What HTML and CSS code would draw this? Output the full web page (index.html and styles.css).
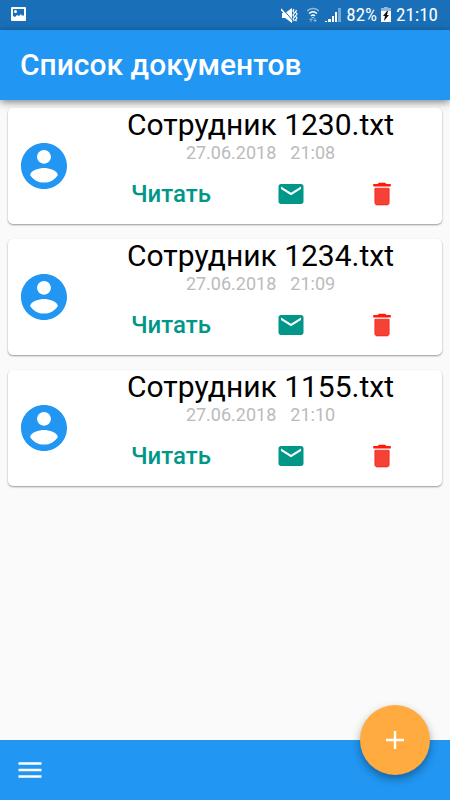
FILE: index.html
```html
<!DOCTYPE html>
<html lang="ru">
<head>
<meta charset="utf-8">
<meta name="viewport" content="width=device-width, initial-scale=1">
<title>Список документов</title>
<link rel="stylesheet" href="styles.css">
</head>
<body>
<svg class="defs" aria-hidden="true">
  <symbol id="account" viewBox="2 2 20 20"><path d="M12 2C6.48 2 2 6.48 2 12s4.48 10 10 10 10-4.48 10-10S17.52 2 12 2zm0 3c1.66 0 3 1.34 3 3s-1.34 3-3 3-3-1.34-3-3 1.34-3 3-3zm0 14.2c-2.500 0-4.710-1.280-6-3.220.03-1.990 4-3.080 6-3.080 1.990 0 5.970 1.090 6 3.080-1.290 1.940-3.500 3.220-6 3.220z"/></symbol>
  <symbol id="mail" viewBox="0 0 24 24"><path d="M20 4H4c-1.100 0-1.990.9-1.990 2L2 18c0 1.100.9 2 2 2h16c1.100 0 2-.9 2-2V6c0-1.100-.9-2-2-2zm0 4l-8 5-8-5V6l8 5 8-5v2z"/></symbol>
  <symbol id="trash" viewBox="0 0 24 24"><path class="can" d="M6.300 19c0 1 .8 1.700 1.700 1.700h8c1 0 1.700-.8 1.700-1.700V7.400H6.300V19z"/><path class="lid" d="M19 4h-3.500l-1-1h-5l-1 1H5v2h14V4z"/></symbol>
</svg>
<div class="screen">
  <div class="status">
    <svg class="status-picture" viewBox="0 0 16 16" aria-hidden="true"><rect x="0" y="0" width="15" height="14" rx="1" fill="#fff"/><path d="M2 2h11v7l-1-1-1 1-1-2-2 2-2-1-2 2-2-1z" fill="#1a70b8"/><circle cx="4.500" cy="4.500" r="1.500" fill="#fff"/></svg>
    <div class="status-right">
      <svg class="status-mute" viewBox="0 0 17 17" aria-hidden="true"><path d="M1 6h3l7-5v15l-7-5H1z" fill="#fff"/><path d="M1.500 1.500l11 13" stroke="#1a70b8" stroke-width="1"/><path d="M0 2l11 13" stroke="#fff" stroke-width="1.500"/><path d="M13 2l-1 2 1.500 2-1.500 2 1.500 2-1.500 2 1.500 2M15.500 3l-1 2 1.500 2-1.500 2 1.500 2-1.500 2 1 1" fill="none" stroke="#fff" stroke-width="1.200"/></svg>
      <svg class="status-wifi" viewBox="0 0 12 16" aria-hidden="true"><g fill="none" stroke="#fff" stroke-width="1.500"><path d="M0 4q6-5 12 0" opacity=".5"/><path d="M2 6.500q4-3.500 8 0M4 9q2-2 4 0"/></g><path d="M5 10h2l-1 1.500z" fill="#fff"/><path d="M2 13l2-2 2 2zM6 13h4l-2 2zM3.500 13h1v2h-1zM7.500 11h1v2h-1z" fill="#fff" opacity=".5"/></svg>
      <svg class="status-signal" viewBox="0 0 16 16" aria-hidden="true"><path d="M0 14h2v1H0zM3 12h3v3H3zM7 9h2v6H7zM10 5h2v10h-2z" fill="#fff"/><path d="M13 1h3v14h-3z" fill="#fff" opacity=".4"/></svg>
      <span class="battery-text">82%</span>
      <svg class="status-battery" viewBox="0 0 10 16" aria-hidden="true"><path d="M3 0h4v1h3v3H0V1h3z" fill="#fff" opacity=".5"/><path d="M0 4h10v11H0z" fill="#fff"/><path d="M6 4L2 9h2l-1 5 5-6H6l1-4z" fill="#111"/></svg>
      <span>21:10</span>
    </div>
  </div>
  <header class="appbar"><h1>Список документов</h1></header>
  <main class="list">
    <article class="card">
      <svg class="avatar" aria-hidden="true"><use href="#account"/></svg>
      <div class="content">
        <h2>Сотрудник 1230.txt</h2>
        <p class="date"><span>27.06.2018</span><span>21:08</span></p>
        <div class="actions">
          <button class="read" type="button">Читать</button>
          <button class="icon mail" type="button" aria-label="Отправить"><svg><use href="#mail"/></svg></button>
          <button class="icon trash" type="button" aria-label="Удалить"><svg><use href="#trash"/></svg></button>
        </div>
      </div>
    </article>
    <article class="card">
      <svg class="avatar" aria-hidden="true"><use href="#account"/></svg>
      <div class="content">
        <h2>Сотрудник 1234.txt</h2>
        <p class="date"><span>27.06.2018</span><span>21:09</span></p>
        <div class="actions">
          <button class="read" type="button">Читать</button>
          <button class="icon mail" type="button" aria-label="Отправить"><svg><use href="#mail"/></svg></button>
          <button class="icon trash" type="button" aria-label="Удалить"><svg><use href="#trash"/></svg></button>
        </div>
      </div>
    </article>
    <article class="card">
      <svg class="avatar" aria-hidden="true"><use href="#account"/></svg>
      <div class="content">
        <h2>Сотрудник 1155.txt</h2>
        <p class="date"><span>27.06.2018</span><span>21:10</span></p>
        <div class="actions">
          <button class="read" type="button">Читать</button>
          <button class="icon mail" type="button" aria-label="Отправить"><svg><use href="#mail"/></svg></button>
          <button class="icon trash" type="button" aria-label="Удалить"><svg><use href="#trash"/></svg></button>
        </div>
      </div>
    </article>
  </main>
  <footer class="bottombar">
    <button class="menu" type="button" aria-label="Меню"><svg viewBox="0 0 24 16"><path d="M.5.3h23v2.500H.5zM.5 6.700h23v2.600H.5zM.5 13.200h23v2.500H.5z"/></svg></button>
    <button class="fab" type="button" aria-label="Добавить"><svg viewBox="0 0 18 18"><path d="M7.800 0h2.400v7.800H18v2.400h-7.800V18H7.800v-7.800H0V7.800h7.800z"/></svg></button>
  </footer>
</div>
</body>
</html>
```
FILE: styles.css
```css
* {
  box-sizing: border-box;
}

body {
  margin: 0;
  background: #fafafa;
  color: #000;
  font-family: Roboto, "Noto Sans", sans-serif;
}

h1, h2, p {
  margin: 0;
}

button {
  margin: 0;
  padding: 0;
  border: 0;
  background: none;
  font: inherit;
  cursor: pointer;
}

svg {
  display: block;
}

.defs {
  display: none;
}

.screen {
  display: flex;
  flex-direction: column;
  min-height: 100vh;
}

.status {
  display: flex;
  align-items: center;
  justify-content: space-between;
  height: 30px;
  padding: 0 12px 0 11px;
  background: #1a70b8;
  color: #fff;
  font-family: "Roboto Condensed", Roboto, sans-serif;
  font-size: 19px;
  line-height: 30px;
}

.status-right {
  display: flex;
  align-items: center;
}

.status-picture {
  width: 16px;
  height: 16px;
}

.status-mute {
  width: 17px;
  height: 17px;
  margin-right: 9px;
}

.status-wifi {
  width: 12px;
  height: 16px;
  margin-right: 6px;
}

.status-signal {
  width: 16px;
  height: 16px;
  margin-right: 5px;
}

.status-battery {
  width: 10px;
  height: 16px;
  margin: 0 5px 0 4px;
}

.appbar {
  display: flex;
  align-items: center;
  height: 70px;
  padding: 0 20px;
  background: #2196f3;
  color: #fff;
  box-shadow: 0 2px 8px rgba(0, 0, 0, 0.5);
}

.appbar h1 {
  font-size: 30px;
  font-weight: 500;
  line-height: 40px;
}

.list {
  display: flex;
  flex: 1;
  flex-direction: column;
  gap: 15px;
  padding: 8px;
}

.card {
  display: flex;
  align-items: center;
  height: 116px;
  padding-left: 13px;
  border-radius: 5px;
  background: #fff;
  box-shadow: 0 1px 2px rgba(0, 0, 0, 0.4);
}

.avatar {
  flex: none;
  width: 46px;
  height: 46px;
  fill: #2196f3;
}

.content {
  flex: 1;
  height: 100%;
  margin-left: 12px;
  text-align: center;
}

.content h2 {
  font-size: 30px;
  font-weight: 400;
  line-height: 34px;
}

.date {
  display: flex;
  justify-content: center;
  gap: 14px;
  color: #bbb;
  font-size: 18px;
  line-height: 22px;
}

.actions {
  display: flex;
  align-items: center;
  justify-content: center;
  height: 60px;
  padding-left: 7px;
}

.read {
  margin-right: 65px;
  color: #009688;
  font-size: 24px;
  font-weight: 500;
  line-height: 30px;
}

.icon svg {
  width: 30px;
  height: 30px;
}

.mail {
  margin-right: 61px;
  fill: #009688;
}

.can {
  fill: #f44336;
  stroke: #ff1a0a;
  stroke-width: 0.6;
}

.lid {
  fill: #ff1a0a;
}

.bottombar {
  position: relative;
  display: flex;
  align-items: center;
  height: 60px;
  padding: 0 18px;
  background: #2196f3;
}

.menu svg {
  width: 24px;
  height: 16px;
  fill: #fff;
}

.fab {
  position: absolute;
  top: -35px;
  right: 20px;
  display: flex;
  align-items: center;
  justify-content: center;
  width: 70px;
  height: 70px;
  border-radius: 50%;
  background: #ffab40;
  box-shadow: 0 4px 8px rgba(0, 0, 0, 0.35);
}

.fab svg {
  width: 18px;
  height: 18px;
  fill: #fff;
}
```
